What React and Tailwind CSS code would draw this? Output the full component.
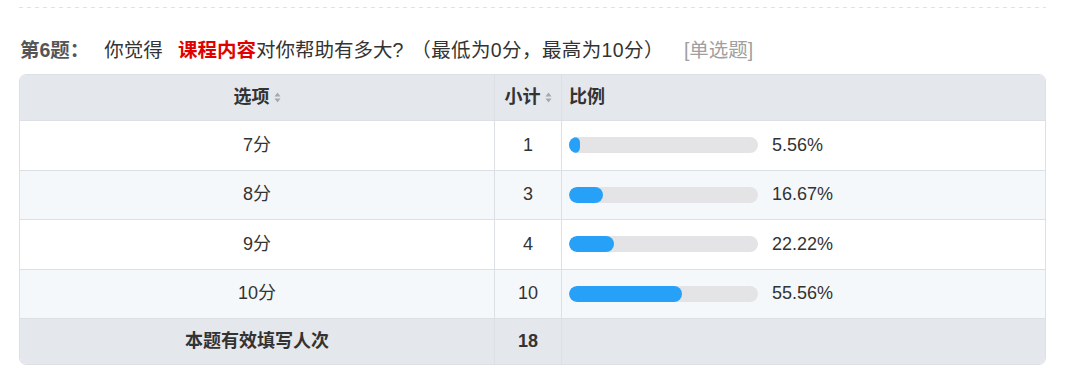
import React from "react";

const rows = [
  { label: "7分", count: 1, pct: 5.56 },
  { label: "8分", count: 3, pct: 16.67 },
  { label: "9分", count: 4, pct: 22.22 },
  { label: "10分", count: 10, pct: 55.56 },
];

const SortIcon = () => (
  <svg width="7" height="11" viewBox="0 0 7 11" className="ml-[4px] inline-block">
    <path d="M3.5 0.5 L6.5 4.5 L0.5 4.5 Z" fill="#a8a8a8" />
    <path d="M3.5 10.5 L6.5 6.5 L0.5 6.5 Z" fill="#a8a8a8" />
  </svg>
);

const Bar = ({ pct }) => (
  <div className="flex items-center pl-[7px]">
    <div className="w-[189px] h-[16px] rounded-full bg-[#e4e4e6] overflow-hidden">
      <div
        className="h-full rounded-full bg-[#27a1f7]"
        style={{ width: `${(pct / 100) * 203}px` }}
      />
    </div>
    <span className="ml-[14px]">{pct.toFixed(2)}%</span>
  </div>
);

export default function App() {
  return (
    <div className="bg-white w-[1080px] h-[379px] px-[19px] font-['Liberation_Sans','Noto_Sans_CJK_SC',sans-serif] text-[#333]">
      <div className="pt-[7px]">
        <div className="h-px w-[1027px] bg-[linear-gradient(to_right,#e2e2e2_50%,transparent_50%)] bg-[length:8px_1px]" />
      </div>

      {/* 题目 */}
      <div className="mt-[30px] h-[24px] flex items-center text-[19.5px] leading-[24px] pl-px">
        <span className="font-bold text-[#555]">第6题：</span>
        <span className="ml-[15px]">你觉得</span>
        <span className="ml-[15px] font-bold text-[#e00000]">课程内容</span>
        <span>对你帮助有多大?</span>
        <span className="ml-[8px] tracking-[0.4px]">（最低为0分，最高为10分）</span>
        <span className="ml-[20px] text-[#a0a0a0]">[单选题]</span>
      </div>

      {/* 表格 */}
      <div className="mt-[12px] w-[1027px] border border-[#dcdfe3] rounded-[7px] overflow-hidden text-[18px]">
        <div className="grid grid-cols-[475px_67px_1fr] h-[46px] bg-[#e4e7ec] border-b border-[#dcdfe3] font-bold">
          <div className="flex items-center justify-center border-r border-[#dcdfe3]">
            选项
            <SortIcon />
          </div>
          <div className="flex items-center justify-center border-r border-[#dcdfe3]">
            小计
            <SortIcon />
          </div>
          <div className="flex items-center pl-[7px]">比例</div>
        </div>

        {rows.map((r, i) => (
          <div
            key={r.label}
            className={`grid grid-cols-[475px_67px_1fr] h-[49.5px] border-b border-[#dcdfe3] ${
              i % 2 === 1 ? "bg-[#f5f8fb]" : "bg-white"
            }`}
          >
            <div className="flex items-center justify-center border-r border-[#dcdfe3]">{r.label}</div>
            <div className="flex items-center justify-center border-r border-[#dcdfe3]">{r.count}</div>
            <Bar pct={r.pct} />
          </div>
        ))}

        <div className="grid grid-cols-[475px_67px_1fr] h-[45px] bg-[#e4e7ec] font-bold">
          <div className="flex items-center justify-center border-r border-[#dcdfe3]">本题有效填写人次</div>
          <div className="flex items-center justify-center border-r border-[#dcdfe3]">18</div>
          <div />
        </div>
      </div>
    </div>
  );
}
